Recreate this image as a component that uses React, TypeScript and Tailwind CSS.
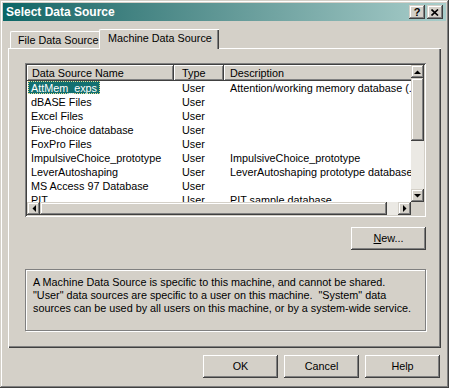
import React from "react"

const raised =
  "shadow-[inset_-1px_-1px_#404040,inset_1px_1px_#ffffff,inset_-2px_-2px_#808080,inset_2px_2px_#d4d0c8]"
const scrollBtn =
  "shadow-[inset_-1px_-1px_#404040,inset_1px_1px_#d4d0c8,inset_-2px_-2px_#808080,inset_2px_2px_#ffffff]"
const sunken =
  "shadow-[inset_1px_1px_#808080,inset_-1px_-1px_#ffffff,inset_2px_2px_#404040,inset_-2px_-2px_#d4d0c8]"

const rows = [
  { name: "AttMem_exps", type: "User", desc: "Attention/working memory database (..", selected: true },
  { name: "dBASE Files", type: "User", desc: "" },
  { name: "Excel Files", type: "User", desc: "" },
  { name: "Five-choice database", type: "User", desc: "" },
  { name: "FoxPro Files", type: "User", desc: "" },
  { name: "ImpulsiveChoice_prototype", type: "User", desc: "ImpulsiveChoice_prototype" },
  { name: "LeverAutoshaping", type: "User", desc: "LeverAutoshaping prototype database" },
  { name: "MS Access 97 Database", type: "User", desc: "" },
  { name: "PIT", type: "User", desc: "PIT sample database" },
]

const Arrow = ({ dir }: { dir: "up" | "down" | "left" | "right" }) => {
  const pts =
    dir === "up" ? "0,4 7,4 3.5,0.5" :
    dir === "down" ? "0,0 7,0 3.5,3.5" :
    dir === "left" ? "4,0 4,7 0.5,3.5" :
    "0,0 0,7 3.5,3.5"
  const w = dir === "up" || dir === "down" ? 7 : 4
  const h = dir === "up" || dir === "down" ? 4 : 7
  return (
    <svg width={w} height={h} viewBox={`0 0 ${w} ${h}`}>
      <polygon points={pts} fill="#000" />
    </svg>
  )
}

const PushButton = ({ children }: { children: React.ReactNode }) => (
  <div className={`w-[75px] h-[23px] flex items-center justify-center bg-[#d4d0c8] ${raised}`}>
    {children}
  </div>
)

export default function App() {
  return (
    <div
      className={`w-[449px] h-[388px] bg-[#d4d0c8] p-[3px] flex flex-col text-[10.8px] leading-[13px] text-black font-['Liberation_Sans',Arial,sans-serif] shadow-[inset_-1px_-1px_#404040,inset_1px_1px_#d4d0c8,inset_-2px_-2px_#808080,inset_2px_2px_#ffffff]`}
    >
      {/* Title bar */}
      <div className="h-[18px] flex items-center bg-linear-to-r from-[#086666] to-[#a8cdca]">
        <span className="pl-[3px] font-bold text-white text-[12px]">Select Data Source</span>
        <div className="ml-auto flex items-center gap-[2px] mr-[3px]">
          <div className={`w-[16px] h-[14px] bg-[#d4d0c8] flex items-center justify-center font-bold text-[11px] ${scrollBtn}`}>
            ?
          </div>
          <div className={`w-[16px] h-[14px] bg-[#d4d0c8] flex items-center justify-center ${scrollBtn}`}>
            <svg width="8" height="7" viewBox="0 0 8 7">
              <path d="M0.5 0.5 L7 6.5 M7 0.5 L0.5 6.5" stroke="#000" strokeWidth="1.6" />
            </svg>
          </div>
        </div>
      </div>

      {/* Body */}
      <div className="flex-1 px-[5px] pt-[8px] flex flex-col">
        {/* Tabs */}
        <div className="h-[19px] flex items-end pl-[2px] relative z-10">
          <div className="w-[91px] h-[17px] pl-[7px] flex items-center border-t border-l border-white rounded-tl-[2px] shadow-[inset_-1px_0_#404040,inset_-2px_0_#808080]">
            File Data Source
          </div>
          <div className="w-[120px] h-[20px] -ml-[2px] -mb-[1px] pl-[8px] pb-[2px] flex items-center bg-[#d4d0c8] border-t border-l border-white rounded-tl-[2px] shadow-[inset_-1px_0_#404040,inset_-2px_0_#808080]">
            Machine Data Source
          </div>
        </div>

        {/* Tab panel */}
        <div className="h-[300px] border-t border-l border-white pt-[14px] pl-[16px] pr-[15px] flex flex-col shadow-[inset_-1px_-1px_#404040,inset_-2px_-2px_#808080]">
          {/* List view */}
          <div className={`h-[154px] p-[2px] bg-white flex flex-col ${sunken}`}>
            <div className="h-[137px] flex">
              <div className="flex-1 overflow-hidden">
                <div className="h-[16px] flex bg-[#d4d0c8] whitespace-nowrap">
                  <div className={`w-[147px] flex-none pl-[5px] flex items-center ${raised}`}>Data Source Name</div>
                  <div className={`w-[50px] flex-none pl-[8px] flex items-center ${raised}`}>Type</div>
                  <div className={`w-[220px] flex-none pl-[6px] flex items-center ${raised}`}>Description</div>
                </div>
                {rows.map((r) => (
                  <div key={r.name} className="h-[14px] flex items-center whitespace-nowrap">
                    <div className="w-[147px] flex-none pl-[1px]">
                      <span
                        className={
                          r.selected
                            ? "inline-block h-[13px] px-[2px] border border-dotted border-[#e8e090] bg-[#137070] text-white"
                            : "inline-block h-[13px] px-[2px] border border-transparent"
                        }
                      >
                        {r.name}
                      </span>
                    </div>
                    <div className="w-[50px] flex-none pl-[8px]">{r.type}</div>
                    <div className="flex-none pl-[6px]">{r.desc}</div>
                  </div>
                ))}
              </div>
              {/* Vertical scrollbar */}
              <div className="w-[13px] flex flex-col bg-[#d4d0c8]">
                <div className={`h-[13px] flex items-center justify-center ${scrollBtn}`}>
                  <Arrow dir="up" />
                </div>
                <div className={`h-[63px] ${scrollBtn}`} />
                <div className="flex-1 bg-[#ebe9e4]" />
                <div className={`h-[13px] flex items-center justify-center ${scrollBtn}`}>
                  <Arrow dir="down" />
                </div>
              </div>
            </div>
            {/* Horizontal scrollbar */}
            <div className="h-[13px] flex">
              <div className="flex-1 flex bg-[#d4d0c8]">
                <div className={`w-[13px] flex items-center justify-center ${scrollBtn}`}>
                  <Arrow dir="left" />
                </div>
                <div className={`w-[347px] ${scrollBtn}`} />
                <div className="flex-1 bg-[#ebe9e4]" />
                <div className={`w-[13px] flex items-center justify-center ${scrollBtn}`}>
                  <Arrow dir="right" />
                </div>
              </div>
              <div className="w-[13px] bg-[#d4d0c8]" />
            </div>
          </div>

          {/* New button */}
          <div className="mt-[10px] flex justify-end">
            <PushButton>
              <span>
                <span className="underline">N</span>ew...
              </span>
            </PushButton>
          </div>

          {/* Description group */}
          <div className="mt-[19px] h-[62px] border border-[#808080] pt-[6px] pl-[7px] whitespace-pre shadow-[inset_1px_1px_#ffffff,1px_1px_#ffffff]">
            <div>A Machine Data Source is specific to this machine, and cannot be shared.</div>
            <div>"User" data sources are specific to a user on this machine.  "System" data</div>
            <div>sources can be used by all users on this machine, or by a system-wide service.</div>
          </div>
        </div>

        {/* Dialog buttons */}
        <div className="mt-[7px] flex justify-end gap-[6px] mr-[1px]">
          <PushButton>OK</PushButton>
          <PushButton>Cancel</PushButton>
          <PushButton>Help</PushButton>
        </div>
      </div>
    </div>
  )
}
